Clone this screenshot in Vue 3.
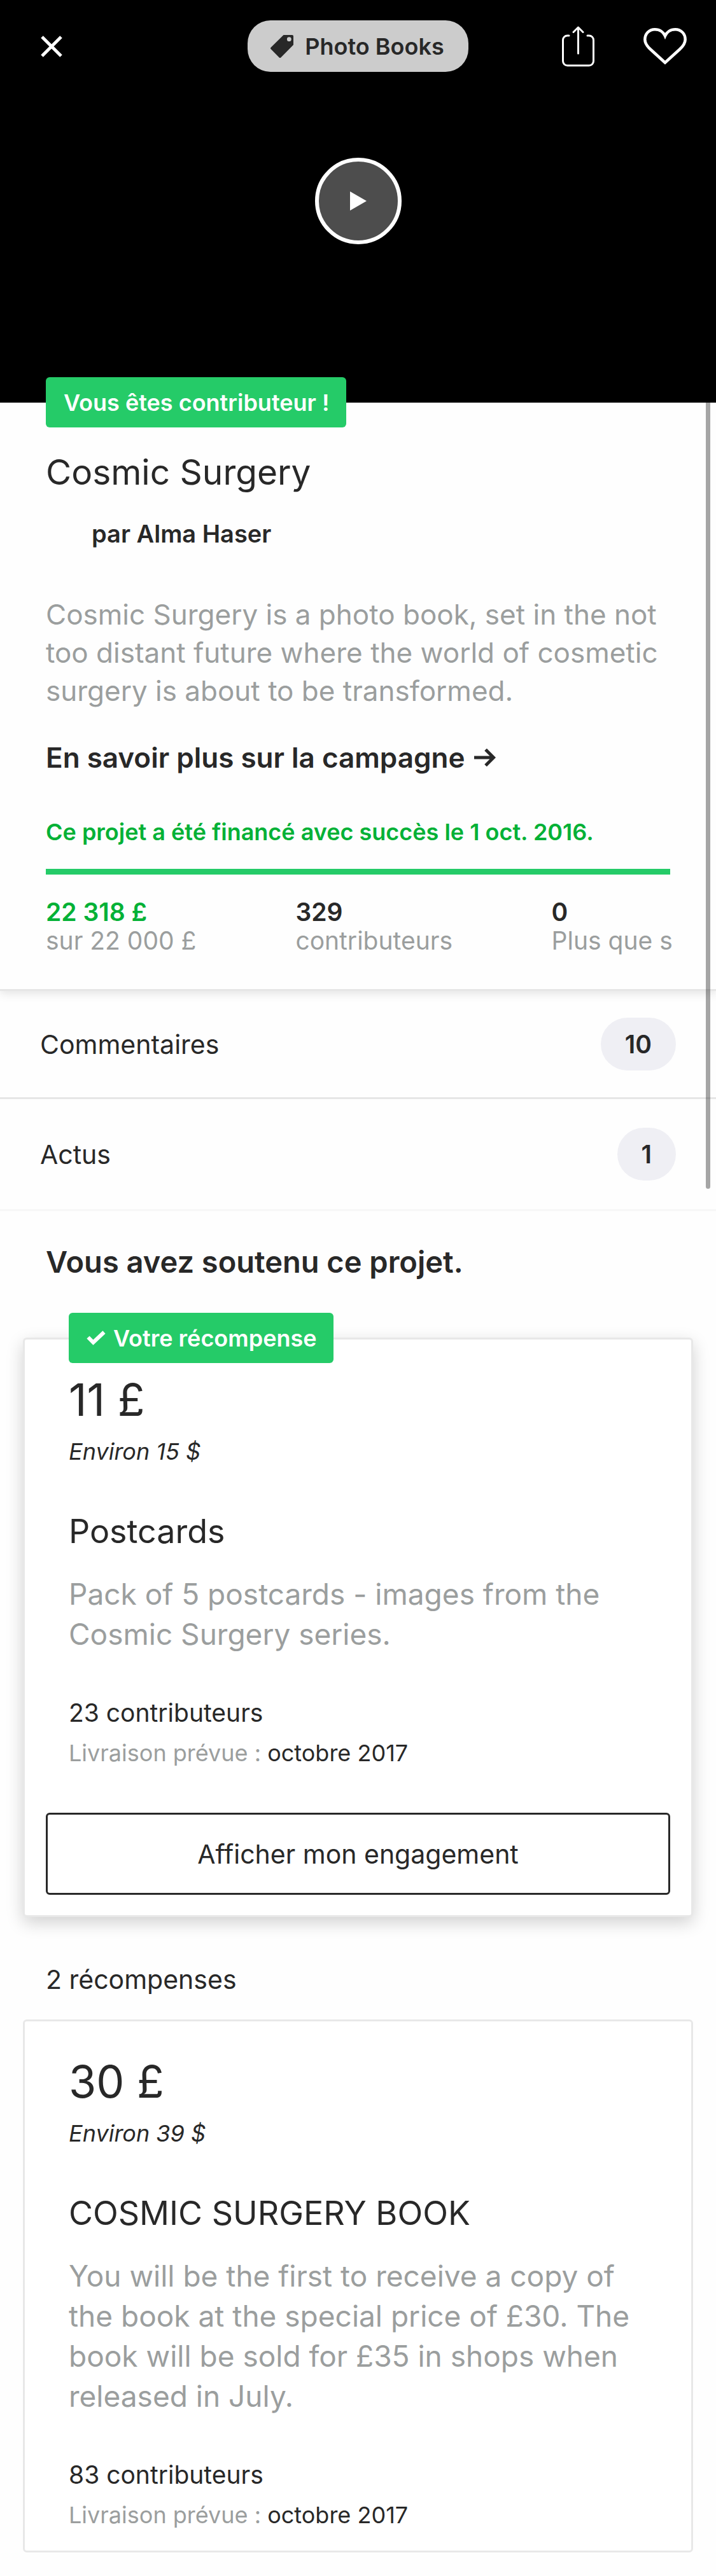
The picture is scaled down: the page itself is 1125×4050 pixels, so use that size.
<script setup>
const stats = [
  { value: '22 318 £', label: 'sur 22 000 £', success: true },
  { value: '329', label: 'contributeurs' },
  { value: '0', label: 'Plus que s' },
]

const links = [
  { label: 'Commentaires', count: 10 },
  { label: 'Actus', count: 1 },
]

const rewards = [
  {
    selected: true,
    amount: '11 £',
    converted: 'Environ 15 $',
    title: 'Postcards',
    description: 'Pack of 5 postcards - images from the Cosmic Surgery series.',
    backers: '23 contributeurs',
    delivery: 'octobre 2017',
  },
  {
    selected: false,
    amount: '30 £',
    converted: 'Environ 39 $',
    title: 'COSMIC SURGERY BOOK',
    description:
      'You will be the first to receive a copy of the book at the special price of £30. The book will be sold for £35 in shops when released in July.',
    backers: '83 contributeurs',
    delivery: 'octobre 2017',
  },
]
</script>

<template>
  <main class="page">
    <header class="hero">
      <nav class="toolbar">
        <button class="close" type="button" aria-label="Fermer">
          <svg width="36" height="36" viewBox="0 0 36 36" fill="none" stroke="#fff" stroke-width="5">
            <path d="M3 3 33 33M33 3 3 33" />
          </svg>
        </button>
        <a class="category" href="#">
          <svg width="36" height="36" viewBox="0 0 36 36" fill="#282828">
            <path
              fill-rule="evenodd"
              d="M20.500 0H34a2 2 0 0 1 2 2v13.500L16.500 35.200a2 2 0 0 1-3 0L.7 22.300a2 2 0 0 1 0-2.800ZM29.300 3.300a3.400 3.400 0 1 0 0 6.800 3.400 3.400 0 0 0 0-6.800Z"
            />
          </svg>
          Photo Books
        </a>
        <div class="actions">
          <button type="button" aria-label="Partager">
            <svg
              width="51"
              height="64"
              viewBox="0 0 51 64"
              fill="none"
              stroke="#fff"
              stroke-width="3"
              stroke-linecap="round"
              stroke-linejoin="round"
            >
              <path d="M11 15H8.500a7 7 0 0 0-7 7v33a7 7 0 0 0 7 7h34a7 7 0 0 0 7-7V22a7 7 0 0 0-7-7H40" />
              <path d="M25.500 43V2M18 9.500 25.500 2 33 9.500" />
            </svg>
          </button>
          <button type="button" aria-label="Aimer">
            <svg width="68" height="58" viewBox="0 0 68 58" fill="none" stroke="#fff" stroke-width="4.500">
              <path
                d="M34 54.500 11 33.500C5 28 2.300 24 2.300 18 2.300 9 9 2.300 18 2.300c7.500 0 13.500 4.200 16 10.200 2.500-6 8.500-10.200 16-10.200 9 0 15.700 6.700 15.700 15.700 0 6-2.700 10-8.700 15.500Z"
              />
            </svg>
          </button>
        </div>
      </nav>
      <button class="play" type="button" aria-label="Lire la vidéo">
        <svg width="26" height="30" viewBox="0 0 26 30" fill="#fff"><path d="M0 0 26 15 0 30Z" /></svg>
      </button>
    </header>

    <div class="content">
      <div class="scrollbar" aria-hidden="true"></div>

      <section class="summary">
        <span class="flag summary-flag">Vous êtes contributeur !</span>
        <h1>Cosmic Surgery</h1>
        <p class="author">par Alma Haser</p>
        <p class="blurb">
          Cosmic Surgery is a photo book, set in the not too distant future where the world of cosmetic surgery is about to be transformed.
        </p>
        <a class="more" href="#">
          En savoir plus sur la campagne
          <svg width="34" height="28" viewBox="0 0 34 28" fill="none" stroke="#282828" stroke-width="5">
            <path d="M0 14H30M18 1.500 30.500 14 18 26.500" />
          </svg>
        </a>
        <p class="funded">Ce projet a été financé avec succès le 1 oct. 2016.</p>
        <div class="bar"></div>
        <dl class="stats">
          <div v-for="s in stats" :key="s.label" class="stat">
            <dt :class="{ success: s.success }">{{ s.value }}</dt>
            <dd>{{ s.label }}</dd>
          </div>
        </dl>
      </section>

      <nav class="links">
        <a v-for="l in links" :key="l.label" class="row" href="#">
          {{ l.label }}
          <span class="count">{{ l.count }}</span>
        </a>
      </nav>

      <section class="rewards">
        <h2>Vous avez soutenu ce projet.</h2>
        <template v-for="r in rewards" :key="r.title">
          <p v-if="!r.selected" class="total">2 récompenses</p>
          <article class="card" :class="{ selected: r.selected }">
            <span v-if="r.selected" class="flag card-flag">
              <svg width="30" height="24" viewBox="0 0 30 24" fill="none" stroke="#fff" stroke-width="6">
                <path d="M2.500 10.500 10.500 18.500 27.500 2.500" />
              </svg>
              Votre récompense
            </span>
            <div class="details">
              <p class="amount">{{ r.amount }}</p>
              <p class="converted">{{ r.converted }}</p>
              <h3>{{ r.title }}</h3>
              <p class="description">{{ r.description }}</p>
              <p class="backers">{{ r.backers }}</p>
              <p class="delivery">Livraison prévue : <time>{{ r.delivery }}</time></p>
            </div>
            <button v-if="r.selected" class="pledge" type="button">Afficher mon engagement</button>
          </article>
        </template>
      </section>
    </div>
  </main>
</template>

<style>
body {
  margin: 0;
  background: #fefefe;
}
</style>

<style scoped>
.page {
  font-family: Inter, Roboto, sans-serif;
  color: #282828;
}
h1, h2, h3, p, dl, dd {
  margin: 0;
  font-weight: 400;
}
a {
  color: inherit;
  text-decoration: none;
}
button {
  padding: 0;
  font: inherit;
  color: inherit;
  background: none;
  border: 0;
}
svg {
  display: block;
  flex: none;
}

.hero {
  display: flex;
  flex-direction: column;
  align-items: center;
  gap: 135px;
  padding: 32px 0 249px;
  background: #000;
}
.toolbar {
  display: grid;
  grid-template-columns: 1fr auto 1fr;
  align-items: center;
  box-sizing: border-box;
  width: 100%;
  padding: 0 46px;
}
.close {
  justify-self: start;
  padding-left: 17px;
}
.category {
  display: flex;
  align-items: center;
  gap: 18px;
  height: 81px;
  padding: 0 38px 0 36px;
  border-radius: 36px;
  background: #ccc;
  font-size: 36px;
  font-weight: 600;
}
.actions {
  display: flex;
  justify-content: flex-end;
  align-items: center;
  gap: 77px;
}
.play {
  display: grid;
  place-items: center;
  width: 136px;
  height: 136px;
  border: 6px solid #fff;
  border-radius: 50%;
  background: #4d4d4d;
}

.content {
  position: relative;
}
.scrollbar {
  position: absolute;
  z-index: 2;
  top: 0;
  right: 9px;
  width: 7px;
  height: 1236px;
  border-radius: 0 0 4px 4px;
  background: rgba(0, 0, 0, 0.35);
}
.flag {
  position: absolute;
  display: flex;
  align-items: center;
  gap: 12px;
  height: 79px;
  padding: 0 26px 0 28px;
  border-radius: 6px;
  background: #25cb68;
  color: #fff;
  font-size: 36px;
  font-weight: 600;
  white-space: nowrap;
}
.summary-flag {
  top: -40px;
  left: 72px;
}

.summary {
  padding: 73px 72px 54px;
  border-bottom: 3px solid #e6e6e6;
  box-shadow: 0 3px 15px rgba(0, 0, 0, 0.12);
}
h1 {
  font-size: 55px;
  line-height: 72px;
}
.author {
  margin-top: 37px;
  padding-left: 72px;
  font-size: 38px;
  font-weight: 600;
  line-height: 48px;
}
.blurb {
  margin-top: 73px;
  font-size: 44px;
  line-height: 60px;
  color: #9b9e9e;
}
.more {
  display: flex;
  align-items: center;
  gap: 15px;
  margin-top: 45px;
  font-size: 44px;
  font-weight: 600;
  line-height: 60px;
}
.funded {
  margin-top: 63px;
  font-size: 36px;
  font-weight: 600;
  line-height: 48px;
  color: #03b136;
}
.bar {
  height: 9px;
  margin-top: 34px;
  background: #25cb68;
}
.stats {
  display: grid;
  grid-template-columns: 40% 41% 1fr;
  margin-top: 36px;
  font-size: 39px;
  line-height: 45px;
  white-space: nowrap;
}
dt {
  font-weight: 600;
}
dd {
  color: #9b9e9e;
}
.success {
  color: #03b136;
}

.row {
  display: flex;
  justify-content: space-between;
  align-items: center;
  height: 167px;
  padding: 0 63px;
  border-bottom: 3px solid #e6e6e6;
  font-size: 41px;
}
.row:last-child {
  height: 173px;
  border-color: #f7f7f7;
}
.count {
  padding: 0 38px;
  border-radius: 42px;
  background: #efeff4;
  font-size: 39px;
  font-weight: 600;
  line-height: 83px;
}

.rewards {
  padding: 47px 36px 30px;
}
h2 {
  padding-left: 36px;
  font-size: 47px;
  font-weight: 600;
  line-height: 66px;
}
.card {
  position: relative;
  padding: 0 33px 32px;
  border: 3px solid #e8e8e8;
  border-radius: 6px;
  background: #fff;
}
.selected {
  margin-top: 86px;
  box-shadow: 0 9px 27px rgba(0, 0, 0, 0.18);
}
.card-flag {
  top: -42px;
  left: 69px;
}
.details {
  padding: 51px 36px 0;
}
.amount {
  font-size: 70px;
  line-height: 87px;
}
.converted {
  margin-top: 14px;
  font-size: 36px;
  font-style: italic;
  line-height: 48px;
}
h3 {
  margin-top: 69px;
  font-size: 52px;
  line-height: 66px;
}
.description {
  margin-top: 34px;
  font-size: 46px;
  line-height: 63px;
  color: #9b9e9e;
}
.backers {
  margin-top: 68px;
  font-size: 39px;
  line-height: 48px;
}
.delivery {
  margin-top: 15px;
  font-size: 36px;
  line-height: 48px;
  color: #9b9e9e;
}
.delivery time {
  color: #282828;
}
.pledge {
  width: 100%;
  height: 129px;
  margin-top: 70px;
  border: 3px solid #282828;
  border-radius: 6px;
  font-size: 41px;
}
.total {
  padding: 68px 36px 33px;
  font-size: 41px;
  line-height: 60px;
}
</style>
